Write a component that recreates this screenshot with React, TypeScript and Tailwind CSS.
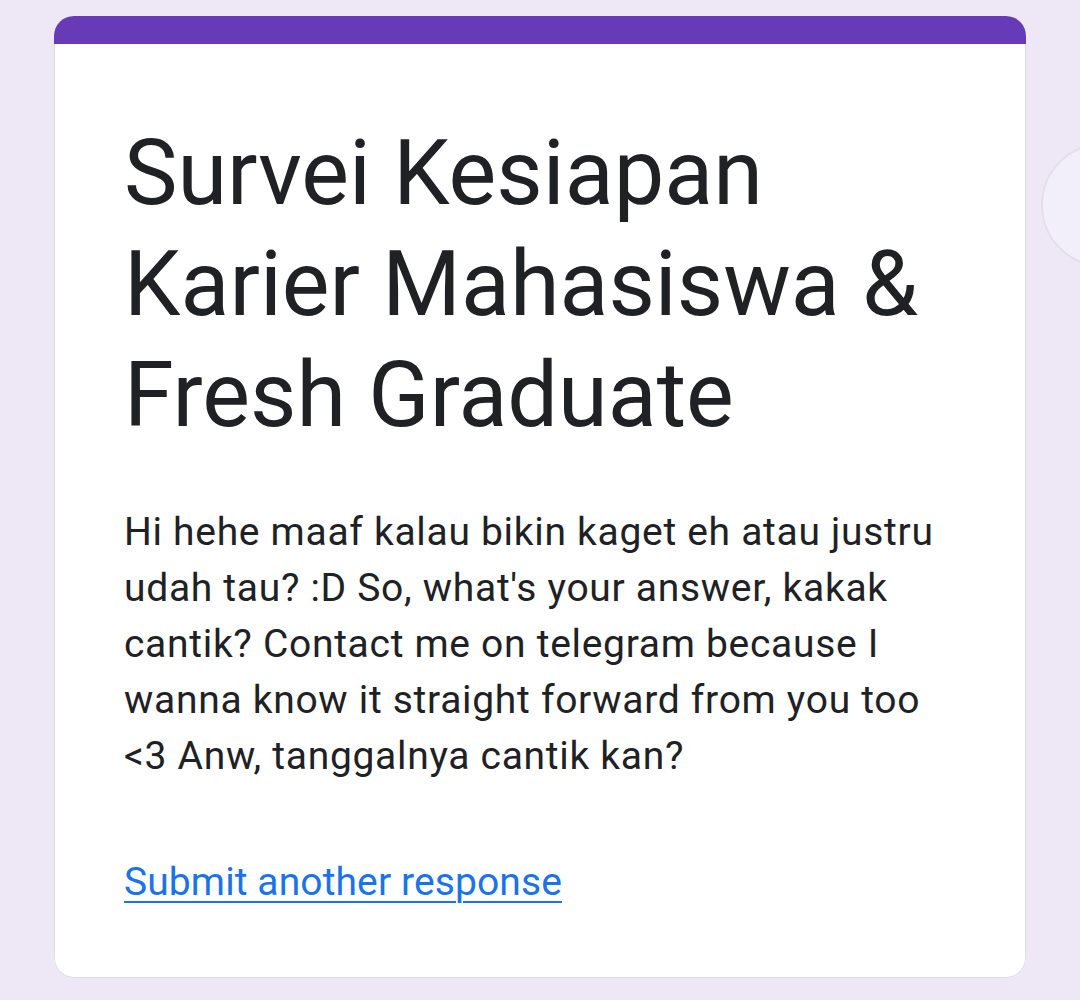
import React from "react";

export default function App() {
  return (
    <div
      className="relative w-[1080px] h-[1000px] overflow-hidden bg-[#ede7f6]"
      style={{ fontFamily: "Roboto, 'Noto Sans', sans-serif" }}
    >
      <div className="absolute left-[1041px] top-[143px] w-[124px] h-[124px] rounded-full bg-[#f3effa] border-2 border-[#e3dfe9]" />
      <div className="pt-[16px] pl-[54px]">
        <div className="w-[972px] h-[962px] rounded-[20px] overflow-hidden bg-white flex flex-col">
          <div className="h-[28px] bg-[#673ab7] shrink-0" />
          <div className="flex-1 border-x border-b border-[#dadce0] rounded-b-[20px] pl-[69px] pr-[30px] pt-[74px]">
            <h1 className="text-[90px] leading-[111px] text-[#202124] font-normal">
              Survei Kesiapan
              <br />
              Karier Mahasiswa &amp;
              <br />
              Fresh Graduate
            </h1>
            <p className="mt-[53px] text-[39px] leading-[56px] tracking-[0.7px] text-[#202124] w-[825px]">
              Hi hehe maaf kalau bikin kaget eh atau justru udah tau? :D So, what's your answer, kakak cantik? Contact me on telegram because I wanna know it straight forward from you too &lt;3 Anw, tanggalnya cantik kan?
            </p>
            <div className="mt-[70px] text-[39px] leading-[56px] tracking-[0.1px]">
              <a className="text-[#1a73e8] underline underline-offset-[6px] decoration-2" href="#">
                Submit another response
              </a>
            </div>
          </div>
        </div>
      </div>
    </div>
  );
}
